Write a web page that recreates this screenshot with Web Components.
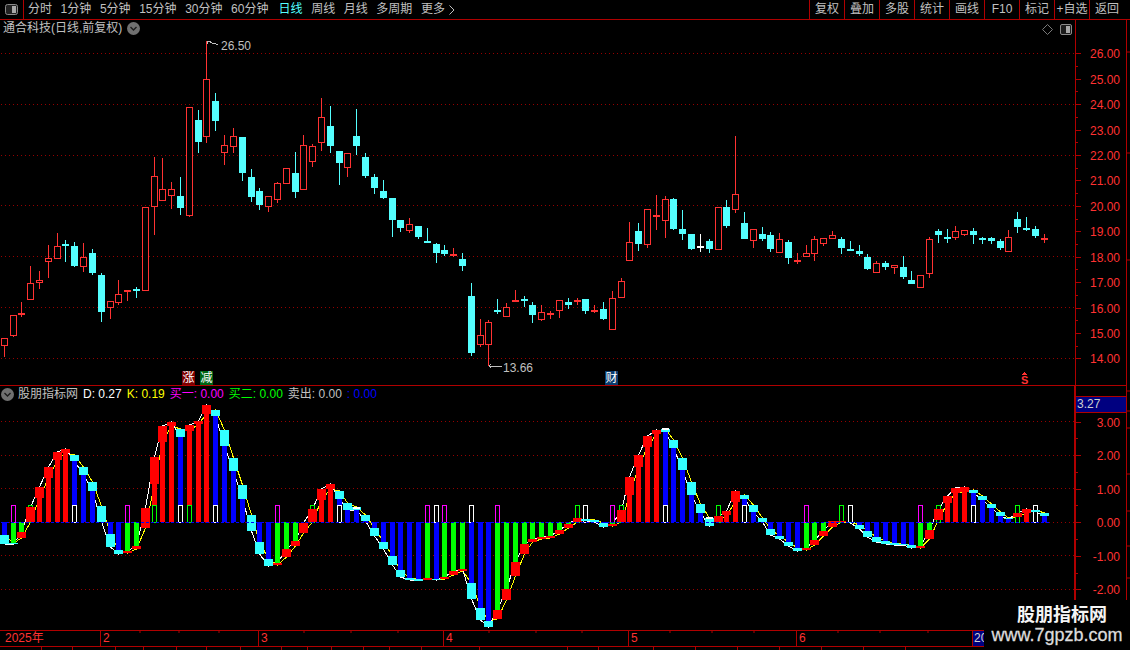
<!DOCTYPE html>
<html lang="zh">
<head>
<meta charset="utf-8">
<title>通合科技</title>
<style>
  html, body { margin: 0; background: #000; overflow: hidden; }
  body { font: 12px "Liberation Sans", "Noto Sans CJK SC", sans-serif; color: #c0c0c0; }
</style>
</head>
<body>
<tdx-terminal>
  <tool-bar slot="bar">
    <tool-tab>分时</tool-tab><tool-tab>1分钟</tool-tab><tool-tab>5分钟</tool-tab><tool-tab>15分钟</tool-tab>
    <tool-tab>30分钟</tool-tab><tool-tab>60分钟</tool-tab><tool-tab active>日线</tool-tab><tool-tab>周线</tool-tab>
    <tool-tab>月线</tool-tab><tool-tab>多周期</tool-tab><tool-tab more>更多</tool-tab>
    <tool-btn slot="right">复权</tool-btn><tool-btn slot="right">叠加</tool-btn><tool-btn slot="right">多股</tool-btn>
    <tool-btn slot="right">统计</tool-btn><tool-btn slot="right">画线</tool-btn><tool-btn slot="right">F10</tool-btn>
    <tool-btn slot="right">标记</tool-btn><tool-btn slot="right">+自选</tool-btn><tool-btn slot="right">返回</tool-btn>
  </tool-bar>
  <kline-pane slot="kline">
    <chart-legend label="通合科技(日线,前复权)"></chart-legend>
  </kline-pane>
  <price-axis slot="kaxis"></price-axis>
  <osc-pane slot="osc">
    <chart-legend label="股朋指标网" leading>
      <legend-val style="color:#fff">D: 0.27</legend-val>
      <legend-val style="color:#ff0">K: 0.19</legend-val>
      <legend-val style="color:#f0f">买一: 0.00</legend-val>
      <legend-val style="color:#0f0">买二: 0.00</legend-val>
      <legend-val style="color:#c0c0c0">卖出: 0.00</legend-val>
      <legend-val style="color:#00f">: 0.00</legend-val>
    </chart-legend>
  </osc-pane>
  <osc-axis slot="oaxis"></osc-axis>
  <time-axis slot="time"></time-axis>
  <tab-strip slot="tabs"></tab-strip>
  <site-watermark slot="mark"></site-watermark>
</tdx-terminal>

<script>
const LINE = "#b00000";
const RED = "#ff3232";
const CYAN = "#54ffff";
const NS = "http://www.w3.org/2000/svg";

// c, bodyTop, bodyBottom, wickTop, wickBottom, colour. top == bottom is a doji
const CANDLES = `4,338,346,338,357,r 13,315,336,315,337,r 21,313,313,302,317,r 30,283,300,266,300,r 39,280,283,271,289,r
48,258,262,245,278,r 57,246,259,233,259,r 65,244,244,240,262,c 74,246,266,242,267,c 83,257,267,243,272,r
92,253,273,249,275,c 101,275,312,273,322,c 110,301,308,301,319,r 118,294,303,280,305,r 127,290,290,290,301,r
136,289,289,287,298,c 145,207,291,207,291,r 154,176,207,157,235,r 162,189,201,158,201,r 171,189,196,182,209,r
180,196,208,177,215,c 189,107,216,107,217,r 198,120,142,110,153,c 206,79,137,41,143,r 215,101,121,93,131,c
224,145,153,135,165,r 233,136,147,128,153,r 242,137,173,137,181,c 251,177,197,169,202,c 259,191,205,188,210,c
268,196,207,196,212,r 277,183,200,182,203,r 286,168,184,168,184,r 295,173,192,152,198,c 303,145,190,135,190,r
312,146,162,144,167,r 321,117,143,98,151,r 330,126,146,106,153,c 339,151,163,151,185,c 347,153,168,153,177,r
356,136,146,109,155,c 365,157,176,153,178,c 374,177,188,174,194,c 383,191,198,180,199,c 392,198,220,198,237,c
400,220,228,220,232,c 409,224,231,218,233,r 418,226,237,226,239,c 427,241,241,228,241,c 436,244,253,243,263,c
444,250,254,245,256,c 453,254,254,248,257,r 462,259,266,253,271,c 471,296,353,283,356,c 480,335,345,319,347,r
488,322,345,320,366,r 497,310,310,299,314,c 506,307,317,303,317,r 515,300,300,290,301,r 524,299,299,296,307,c
532,305,315,302,323,c 541,312,320,305,321,r 550,313,313,311,319,r 559,300,311,300,318,r 568,302,305,298,309,c
577,300,300,298,305,r 585,299,311,299,314,c 594,310,310,305,313,r 603,309,319,302,320,c 612,298,330,291,330,r
621,281,298,278,298,r 629,242,261,222,261,r 638,231,244,223,251,c 647,209,245,209,248,r 656,215,215,195,230,r
665,199,221,196,238,r 673,199,229,198,230,c 682,229,234,210,240,c 691,234,249,234,250,c 700,246,246,234,252,w
709,241,249,239,253,c 718,207,250,207,250,r 726,207,226,200,228,c 735,194,210,136,213,r 744,223,239,212,239,c
753,229,241,229,248,r 762,234,239,227,241,c 770,235,249,232,252,c 779,239,253,233,253,r 788,242,258,240,264,c
797,260,260,253,264,r 806,253,257,245,257,r 814,239,254,236,261,r 823,238,244,238,246,r 832,235,239,231,239,r
841,239,248,237,254,c 850,249,249,241,251,c 859,251,254,245,256,c 867,257,269,254,270,c 876,263,273,261,273,r
885,263,267,261,270,c 894,265,268,265,274,r 903,267,277,256,279,c 911,280,284,271,284,c 920,275,288,275,288,r
929,239,274,237,278,r 938,231,235,229,243,c 947,237,237,229,243,c 955,231,238,226,240,r 964,230,235,230,236,r
973,231,235,228,244,c 982,238,238,237,244,c 991,238,241,237,244,c 1000,241,248,239,250,c 1008,237,252,230,252,r
1017,219,227,212,233,c 1026,228,228,217,231,c 1035,229,236,226,238,c 1044,238,238,234,243,r`
  .trim().split(/\s+/).map(s => { const p = s.split(","); return [+p[0], +p[1], +p[2], +p[3], +p[4], p[5]]; });

// c, capTop, capBottom, cap colour, bar colour (- for no bar)
const OSC = `4,535,544,c,b 13,543,544,c,g 21,532,538,r,g 30,507,522,r,- 39,487,498,r,r 48,467,478,r,r 57,452,460,r,r
65,449,453,r,r 74,455,461,c,b 83,467,475,c,b 92,482,491,c,b 101,506,522,c,- 110,534,547,c,b 118,550,554,c,b
127,551,553,r,g 136,546,549,r,g 145,508,528,r,- 154,457,484,r,r 162,426,442,r,r 171,422,426,r,r 180,429,437,c,b
189,425,431,r,r 198,421,424,r,r 206,405,414,r,r 215,410,416,c,b 224,430,446,c,b 233,458,471,c,b 242,485,499,c,b
251,515,531,c,- 259,542,554,c,b 268,559,566,c,b 277,563,565,r,g 286,549,557,r,g 295,541,546,r,g 303,523,533,r,-
312,509,522,r,- 321,489,500,r,r 330,484,489,r,r 339,491,499,c,b 347,503,510,c,b 356,507,510,c,b 365,515,521,c,b
374,528,536,c,b 383,542,549,c,b 392,556,565,c,b 400,570,577,c,b 409,578,580,c,b 418,579,581,c,b 427,578,580,r,g
436,579,580,c,b 444,577,579,r,g 453,571,575,r,g 462,569,571,r,g 471,583,599,c,b 480,608,620,c,b 488,621,627,c,b
497,610,619,r,g 506,589,600,r,g 515,562,576,r,g 524,544,554,r,g 532,539,542,r,g 541,537,539,r,g 550,536,538,r,g
559,530,534,r,g 568,524,528,r,g 577,518,522,r,- 585,519,521,c,- 594,520,522,c,- 603,523,527,c,b 612,524,526,r,g
621,510,522,r,- 629,477,495,r,r 638,455,467,r,r 647,436,447,r,r 656,430,434,r,r 665,429,432,c,b 673,440,448,c,b
682,458,470,c,b 691,482,495,c,b 700,504,513,c,b 709,518,526,c,- 718,516,522,r,- 726,511,515,r,r 735,491,502,r,r
744,495,499,c,b 753,505,512,c,b 762,518,522,c,b 770,529,535,c,b 779,536,539,c,b 788,542,546,c,b 797,548,551,c,b
806,548,550,r,g 814,540,545,r,g 823,531,536,r,g 832,521,527,r,- 841,521,522,r,- 850,522,523,c,- 859,525,529,c,b
867,531,537,c,b 876,537,542,c,b 885,541,544,c,b 894,543,545,c,b 903,544,545,c,b 911,545,548,c,b 920,546,548,r,g
929,530,539,r,g 938,509,520,r,- 947,496,503,r,r 955,488,493,r,r 964,487,492,r,r 973,490,493,c,b 982,496,500,c,b
991,504,508,c,b 1000,512,516,c,b 1008,518,519,c,b 1017,513,517,r,- 1026,509,513,r,r 1035,510,512,c,b 1044,513,516,c,b`
  .trim().split(/\s+/).map(s => { const p = s.split(","); return [+p[0], +p[1], +p[2], p[3], p[4]]; });

const TICKS = {
  "#f0f": [13, 127, 277, 427, 444, 497, 612, 806, 920],
  "#0f0": [30, 154, 189, 312, 577, 621, 718, 841, 938, 1017],
  "#fff": [74, 180, 215, 339, 436, 471, 585, 665, 744, 850, 973, 1035],
};

function svgEl(parent, name, attrs) {
  const el = document.createElementNS(NS, name);
  for (const k in attrs) el.setAttribute(k, attrs[k]);
  parent.appendChild(el);
  return el;
}

function rect(parent, x, y, w, h, fill) {
  return svgEl(parent, "rect", { x, y, width: w, height: h, fill });
}

// one path of single pixels, every 4px, reads the same at any y
function dotted(parent, y, color = "#960000") {
  let d = "";
  for (let x = 1; x < 1075; x += 4) d += `M${x} ${y}h1v1h-1z`;
  svgEl(parent, "path", { d, fill: color });
}

class Base extends HTMLElement {
  constructor(html) {
    super();
    this.attachShadow({ mode: "open" });
    this.shadowRoot.innerHTML = html;
  }
}

customElements.define("tdx-terminal", class extends Base {
  constructor() {
    super(`
      <style>
        :host {
          display: grid;
          position: relative;
          width: 1130px;
          height: 650px;
          overflow: hidden;
          background: #000;
          grid-template-columns: 1075px 52px 3px;
          grid-template-rows: 20px 366px 244px 17px 3px;
        }
        ::slotted([slot="bar"]), ::slotted([slot="time"]), ::slotted([slot="tabs"]) { grid-column: 1 / -1; }
        .strip { grid-column: 3; display: block; }
      </style>
      <slot name="bar"></slot>
      <slot name="kline"></slot><slot name="kaxis"></slot>
      <svg class="strip" width="3" height="366" style="grid-row:2">
        <path d="M0 32h3M0 133h3M0 240h3" stroke="${LINE}"/>
      </svg>
      <slot name="osc"></slot><slot name="oaxis"></slot>
      <svg class="strip" width="3" height="244" style="grid-row:3">
        <path d="M0 5h3M0 25h3M0 42h3M0 88h3M0 125h3M0 160h3M0 192h3" stroke="${LINE}"/>
      </svg>
      <slot name="time"></slot>
      <slot name="tabs"></slot>
      <slot name="mark"></slot>
    `);
  }
});

customElements.define("tool-bar", class extends Base {
  constructor() {
    super(`
      <style>
        :host {
          display: flex;
          align-items: center;
          height: 20px;
          box-sizing: border-box;
          border-bottom: 1px solid ${LINE};
        }
        .corner {
          display: flex;
          align-items: center;
          justify-content: center;
          width: 23px;
          height: 19px;
          border-right: 1px solid ${LINE};
          margin-right: 4px;
        }
        .tabs { display: flex; gap: 8.6px; flex: 1; }
        .right { display: flex; height: 19px; padding-right: 6px; }
      </style>
      <div class="corner">
        <svg width="13" height="11" viewBox="0 0 13 11">
          <rect x=".5" y=".5" width="12" height="10" rx="2" fill="#222" stroke="#8a8a8a"/>
          <rect x="7" y="2" width="4" height="7" fill="#a8a8a8"/>
        </svg>
      </div>
      <div class="tabs"><slot></slot></div>
      <div class="right"><slot name="right"></slot></div>
    `);
  }
});

customElements.define("tool-tab", class extends Base {
  constructor() {
    super(`
      <style>
        :host { display: inline-flex; align-items: center; gap: 4px; color: #c0c0c0; white-space: nowrap; line-height: 19px; }
        :host([active]) { color: ${CYAN}; margin-left: 1.5px; }
        svg { display: none; }
        :host([more]) svg { display: block; }
      </style>
      <slot></slot>
      <svg width="6" height="10" viewBox="0 0 6 10"><path d="M.5.5 5 5 .5 9.5" fill="none" stroke="#c0c0c0"/></svg>
    `);
  }
});

customElements.define("tool-btn", class extends Base {
  constructor() {
    super(`
      <style>
        :host {
          display: flex;
          align-items: center;
          justify-content: center;
          width: 35px;
          box-sizing: border-box;
          border-left: 1px solid ${LINE};
          color: #c0c0c0;
          white-space: nowrap;
          line-height: 19px;
        }
      </style>
      <slot></slot>
    `);
  }
});

customElements.define("legend-val", class extends Base {
  constructor() {
    super(`<style>:host { display: block; white-space: nowrap; line-height: 17px; height: 17px; }</style><slot></slot>`);
  }
});

customElements.define("chart-legend", class extends Base {
  constructor() {
    super(`
      <style>
        :host {
          position: absolute;
          left: 3px;
          top: 0;
          display: flex;
          align-items: center;
          height: 17px;
          line-height: 17px;
          gap: 5px;
          color: #c0c0c0;
          white-space: nowrap;
        }
        :host([leading]) { left: 1px; gap: 4px; }
        .chev { display: block; flex: none; }
        .vals { display: flex; gap: 5px; margin-left: 1px; }
      </style>
    `);
  }
  connectedCallback() {
    if (this.shadowRoot.querySelector("svg")) return;
    const chev = `<svg class="chev" width="13" height="13" viewBox="0 0 13 13">
        <circle cx="6.5" cy="6.5" r="6.5" fill="#707070"/>
        <path d="M3.5 5 6.5 8 9.5 5" fill="none" stroke="#1c1c1c" stroke-width="1.4"/>
      </svg>`;
    const label = `<span>${this.getAttribute("label")}</span>`;
    const wrap = document.createElement("template");
    wrap.innerHTML = this.hasAttribute("leading")
      ? chev + label + `<div class="vals"><slot></slot></div>`
      : label + chev;
    this.shadowRoot.append(wrap.content);
  }
});

customElements.define("kline-pane", class extends Base {
  constructor() {
    super(`
      <style>
        :host {
          display: block;
          position: relative;
          width: 1075px;
          height: 366px;
          box-sizing: border-box;
          border-bottom: 1px solid ${LINE};
          overflow: hidden;
        }
        svg { display: block; shape-rendering: crispEdges; }
        .price { position: absolute; color: #c0c0c0; line-height: 14px; }
        .badge {
          position: absolute;
          width: 13px;
          height: 14px;
          top: 351px;
          color: #fff;
          font-size: 12px;
          line-height: 14px;
          text-align: center;
        }
        .sell { position: absolute; left: 1021px; top: 355px; color: ${RED}; font-weight: bold; font-size: 11px; line-height: 11px; }
        .tools { position: absolute; left: 1042px; top: 4px; display: flex; gap: 7px; align-items: center; }
        .tools svg { shape-rendering: auto; }
      </style>
      <svg id="s" width="1075" height="365" viewBox="0 20 1075 365"></svg>
      <slot></slot>
      <span class="price" style="left:221px;top:19px">26.50</span>
      <span class="price" style="left:503px;top:341px">13.66</span>
      <span class="badge" style="left:182px;background:#7d0000">涨</span>
      <span class="badge" style="left:200px;background:#006414">减</span>
      <span class="badge" style="left:605px;background:#0a3c6e">财</span>
      <span class="sell">S</span>
      <div class="tools">
        <svg width="11" height="11" viewBox="0 0 11 11"><path d="M5.5.5 10.5 5.5 5.5 10.5 .5 5.5Z" fill="none" stroke="#7a7a7a"/></svg>
        <svg width="12" height="11" viewBox="0 0 12 11">
          <rect x=".5" y=".5" width="11" height="10" rx="1.5" fill="#1c1c1c" stroke="#8a8a8a"/>
          <rect x="6" y="2" width="4" height="7" fill="#a8a8a8"/>
        </svg>
      </div>
    `);
    const s = this.shadowRoot.getElementById("s");
    for (const y of [53, 104, 155, 205, 256, 307, 358]) dotted(s, y);
    for (const [c, top, bot, wt, wb, col] of CANDLES) {
      const color = col === "r" ? RED : col === "w" ? "#fff" : CYAN;
      if (wb > wt) {
        if (wt < top) rect(s, c, wt, 1, top - wt, color);
        if (wb > bot) rect(s, c, bot, 1, wb - bot, color);
      }
      if (top === bot) {
        rect(s, c - 3, top, 7, 2, color);
        rect(s, c, wt, 1, wb - wt, color);
      } else if (col === "r") {
        svgEl(s, "rect", { x: c - 2.5, y: top + .5, width: 6, height: bot - top - 1, fill: "#000", stroke: color });
      } else {
        rect(s, c - 3, top, 7, bot - top, color);
      }
    }
    // high and low arrows
    svgEl(s, "path", { d: "M207 44V41H209M209 41l3 2h2l2 1h2", fill: "none", stroke: "#c0c0c0" });
    svgEl(s, "path", { d: "M489 366H502M491 364l-2 2 2 2", fill: "none", stroke: "#c0c0c0" });
    // arrow of the sell mark
    svgEl(s, "path", { d: "M1024.5 372 1021.5 375H1027.5Z", fill: RED });
  }
});

customElements.define("osc-pane", class extends Base {
  constructor() {
    super(`
      <style>
        :host { display: block; position: relative; width: 1075px; height: 244px; overflow: hidden; }
        svg { display: block; shape-rendering: crispEdges; }
      </style>
      <svg id="s" width="1075" height="244" viewBox="0 386 1075 244"></svg>
      <slot></slot>
    `);
    const s = this.shadowRoot.getElementById("s");
    for (const y of [421, 455, 488, 522, 555, 589]) dotted(s, y);
    const d = [], k = [];
    for (const [c, top, bot, col] of OSC) {
      d.push(`${c + .5},${col === "r" ? top : bot}`);
      k.push(`${c + .5},${col === "r" ? bot : top}`);
    }
    svgEl(s, "polyline", { points: k.join(" "), fill: "none", stroke: "#ff0" });
    svgEl(s, "polyline", { points: d.join(" "), fill: "none", stroke: "#fff" });
    const barColor = { b: "#0000ff", g: "#00ff00", r: "#ff0000" };
    for (const [c, top, bot, col, bar] of OSC) {
      if (bar !== "-") {
        if (bot <= 522) rect(s, c - 2, bot, 5, 522 - bot, barColor[bar]);
        else rect(s, c - 2, 522, 5, top - 522, barColor[bar]);
      }
    }
    for (const [color, list] of Object.entries(TICKS)) {
      for (const c of list) {
        svgEl(s, "rect", { x: c - 1.5, y: 505.5, width: 4, height: 17, fill: "#000", stroke: color });
      }
    }
    for (const [c, top, bot, col] of OSC) {
      rect(s, c - 4, top, 9, bot - top, col === "r" ? "#ff0000" : "#33ffff");
    }
    for (const [c, top] of [[356, 507], [665, 428], [709, 517]]) rect(s, c - 3, top, 7, 2, "#fff");
    rect(s, 610, 522, 5, 2, "#00ff00");
    // blue zero line lies over the bars
    for (let x = 1; x < 1049; x += 5) rect(s, x, 522, 3, 1, "#0000ff");
  }
});

const AXIS_STYLE = `
  :host {
    display: block;
    position: relative;
    width: 52px;
    box-sizing: border-box;
    border-left: 1px solid ${LINE};
    border-right: 1px solid ${LINE};
    overflow: hidden;
  }
  .l { position: absolute; right: 6px; color: ${RED}; line-height: 14px; }
  .t { position: absolute; left: 0; height: 1px; background: ${LINE}; }
`;

function axisLabels(root, origin, pairs, minors) {
  const tpl = document.createElement("template");
  let html = "";
  for (const y of minors) html += `<i class="t" style="top:${y - origin}px;width:2px"></i>`;
  for (const [text, y] of pairs) {
    const top = Math.round(y) - origin;
    html += `<i class="t" style="top:${top}px;width:5px"></i><span class="l" style="top:${top - 6}px">${text}</span>`;
  }
  tpl.innerHTML = html;
  root.append(tpl.content);
}

customElements.define("price-axis", class extends Base {
  constructor() {
    super(`<style>${AXIS_STYLE} :host { height: 366px; } .line { position: absolute; left: 0; right: 0; top: 365px; height: 1px; background: ${LINE}; }</style><div class="line"></div>`);
    const pairs = [], minors = [];
    for (let v = 26; v >= 14; v--) {
      const y = 53.3 + (26 - v) * 25.42;
      pairs.push([v.toFixed(2), y]);
      if (v > 14) minors.push(Math.round(y + 12.7));
    }
    axisLabels(this.shadowRoot, 20, pairs, minors);
  }
});

customElements.define("osc-axis", class extends Base {
  constructor() {
    super(`
      <style>${AXIS_STYLE}
        :host { height: 244px; border-left-width: 2px; margin-left: -1px; width: 53px; }
        .cur {
          position: absolute;
          left: 0;
          right: 0;
          top: 10px;
          height: 15px;
          border-top: 1px solid ${LINE};
          border-bottom: 1px solid ${LINE};
          background: #000080;
          color: #d0d0d0;
          line-height: 15px;
          padding-left: 1px;
        }
      </style>
      <div class="cur">3.27</div>
    `);
    const pairs = [], minors = [];
    for (let v = 3; v >= -2; v--) {
      const y = 522.3 - v * 33.5;
      pairs.push([v.toFixed(2), y]);
      minors.push(Math.round(y + 16.7));
    }
    axisLabels(this.shadowRoot, 386, pairs, minors);
  }
});

customElements.define("time-axis", class extends Base {
  constructor() {
    super(`
      <style>
        :host {
          display: flex;
          position: relative;
          height: 17px;
          box-sizing: border-box;
          border-top: 1px solid ${LINE};
          border-bottom: 1px solid ${LINE};
          color: ${RED};
          line-height: 15px;
          white-space: nowrap;
        }
        span { display: block; box-sizing: border-box; padding-left: 2px; border-left: 1px solid ${LINE}; }
        span:first-of-type { border-left: 0; padding-left: 5px; }
        .cur { background: #000080; color: #d0d0d0; padding-left: 1px; }
        svg { position: absolute; left: 0; top: 0; }
      </style>
      <span style="width:100px">2025年</span>
      <span style="width:158px">2</span>
      <span style="width:185px">3</span>
      <span style="width:185px">4</span>
      <span style="width:168px">5</span>
      <span style="width:176px">6</span>
      <span class="cur" style="width:20px">20</span>
      <svg width="984" height="3">
        <path d="M140 0v2M179 0v2M219 0v2M304 0v2M351 0v2M398 0v2M489 0v2M536 0v2M582 0v2M670 0v2M712 0v2M754 0v2M838 0v2M880 0v2M928 0v2" stroke="${LINE}"/>
      </svg>
    `);
  }
});

customElements.define("tab-strip", class extends Base {
  constructor() {
    const widths = [42, 31, 43, 28, 33, 30, 34, 41, 26, 24, 32, 26, 32, 58, 88, 31, 55, 42, 42, 42, 42, 42, 42];
    super(`
      <style>
        :host { display: flex; height: 3px; overflow: hidden; }
        i { display: block; height: 3px; box-sizing: border-box; border-right: 1px solid ${LINE}; flex: none; }
      </style>
    ` + widths.map(w => `<i style="width:${w}px"></i>`).join(""));
  }
});

customElements.define("site-watermark", class extends Base {
  constructor() {
    super(`
      <style>
        :host {
          position: absolute;
          right: 0;
          bottom: 0;
          width: 146px;
          height: 50px;
          background: #000;
          display: flex;
          flex-direction: column;
          align-items: center;
          padding-top: 5px;
          box-sizing: border-box;
          color: #f4f4f4;
          white-space: nowrap;
        }
        b { display: block; font: bold 18px/21px "Liberation Sans", "Noto Sans CJK SC", sans-serif; margin-left: 10px; }
        span { display: block; font: 18px/21px "Liberation Sans", sans-serif; margin-top: -1px; color: #dcdcdc; -webkit-text-stroke: .3px #dcdcdc; }
      </style>
      <b>股朋指标网</b>
      <span>www.7gpzb.com</span>
    `);
  }
});
</script>
</body>
</html>
